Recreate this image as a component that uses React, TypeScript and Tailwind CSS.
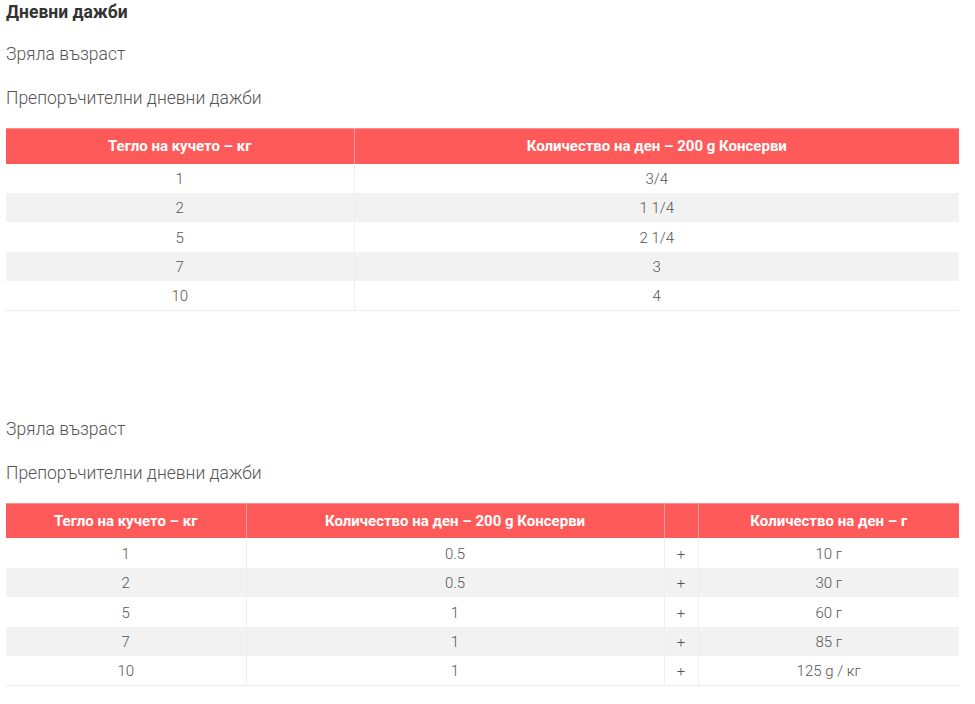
import React from "react";

const rows1 = [
  ["1", "3/4"],
  ["2", "1 1/4"],
  ["5", "2 1/4"],
  ["7", "3"],
  ["10", "4"],
];

const rows2 = [
  ["1", "0.5", "+", "10 г"],
  ["2", "0.5", "+", "30 г"],
  ["5", "1", "+", "60 г"],
  ["7", "1", "+", "85 г"],
  ["10", "1", "+", "125 g / кг"],
];

function Table({ heads, widths, rows }: { heads: string[]; widths: string[]; rows: string[][] }) {
  return (
    <table className="w-[953px] border-collapse table-fixed">
      <colgroup>
        {widths.map((w, i) => (
          <col key={i} className={w} />
        ))}
      </colgroup>
      <thead>
        <tr className="bg-[#ff5a5a] border-t border-[#ff8f8f]">
          {heads.map((h, i) => (
            <th
              key={i}
              className={
                "h-[35px] p-0 text-center text-[15px] font-bold text-white " +
                (i < heads.length - 1 ? "border-r border-[#ff9a9a]" : "")
              }
            >
              {h}
            </th>
          ))}
        </tr>
      </thead>
      <tbody>
        {rows.map((r, ri) => (
          <tr
            key={ri}
            className={
              (ri % 2 === 1 ? "bg-[#f2f2f2] " : "bg-white ") +
              (ri === rows.length - 1 ? "border-b border-[#ececec]" : "")
            }
          >
            {r.map((c, ci) => (
              <td
                key={ci}
                className={
                  "h-[29.4px] p-0 pt-[2px] text-center text-[15px] font-light text-[#555] " +
                  (ci < r.length - 1 ? "border-r border-[#eeeeee]" : "")
                }
              >
                {c}
              </td>
            ))}
          </tr>
        ))}
      </tbody>
    </table>
  );
}

export default function App() {
  return (
    <div className="min-h-[704px] bg-white pl-[6px] font-['Roboto',sans-serif] text-[#555]">
      <h2 className="text-[17.5px] leading-6 font-bold text-[#333]">Дневни дажби</h2>
      <p className="mt-[18px] text-[17.5px] leading-6 font-light">Зряла възраст</p>
      <p className="mt-[20px] mb-[18px] text-[17.5px] leading-6 font-light">Препоръчителни дневни дажби</p>
      <Table
        heads={["Тегло на кучето – кг", "Количество на ден – 200 g Консерви"]}
        widths={["w-[348px]", "w-[605px]"]}
        rows={rows1}
      />
      <p className="mt-[106px] text-[17.5px] leading-6 font-light">Зряла възраст</p>
      <p className="mt-[20px] mb-[18px] text-[17.5px] leading-6 font-light">Препоръчителни дневни дажби</p>
      <Table
        heads={["Тегло на кучето – кг", "Количество на ден – 200 g Консерви", "", "Количество на ден – г"]}
        widths={["w-[240px]", "w-[418px]", "w-[34px]", "w-[261px]"]}
        rows={rows2}
      />
    </div>
  );
}
